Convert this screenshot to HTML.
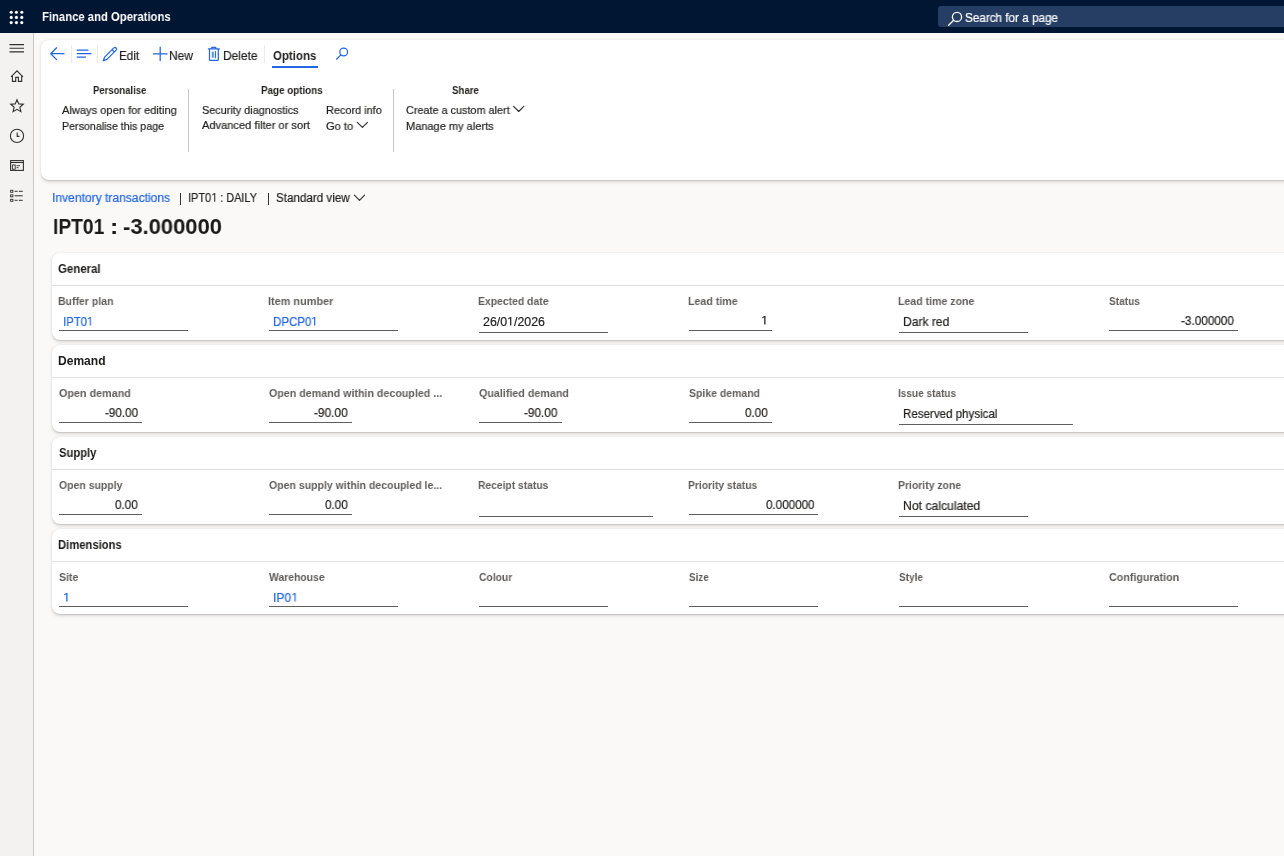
<!DOCTYPE html><html><head><meta charset="utf-8"><title>Finance and Operations</title><style>
*{margin:0;padding:0;box-sizing:border-box}
html,body{width:1284px;height:856px;overflow:hidden;background:#faf9f8;font-family:"Liberation Sans",sans-serif;position:relative}
.t{position:absolute;white-space:nowrap;line-height:1;transform-origin:0 0;will-change:transform}
.r{-webkit-text-stroke:0.2px currentColor}
.one{width:0.5562em;height:0.688em;vertical-align:0.04em;overflow:visible;fill:currentColor}
.abs{position:absolute}
#hdr{position:absolute;left:0;top:0;width:1284px;height:33px;background:#011632}
#search{position:absolute;left:938px;top:6px;width:360px;height:21px;background:#263e64;border-radius:3px}
#nav{position:absolute;left:0;top:33px;width:33px;height:823px;background:#f3f2f1}
#navb{position:absolute;left:33px;top:33px;width:1px;height:823px;background:#c8c6c4}
.card{position:absolute;background:#fff;border-radius:8px;box-shadow:0 1.6px 3.6px rgba(0,0,0,.13),0 0.3px 0.9px rgba(0,0,0,.11)}
.sep{position:absolute;width:1px;background:#c8c6c4}
.ul{position:absolute;height:1px}
.hl{position:absolute;height:1px;background:#e1dfdd}
</style></head><body>
<div id="hdr"></div><div id="search"></div><div id="nav"></div><div id="navb"></div>
<div class="card" style="left:41px;top:40px;width:1300px;height:140px"></div>
<div class="card" style="left:52px;top:253px;width:1300px;height:87px"></div>
<div class="hl" style="left:52px;top:285px;width:1240px"></div>
<div class="card" style="left:52px;top:345px;width:1300px;height:87px"></div>
<div class="hl" style="left:52px;top:377px;width:1240px"></div>
<div class="card" style="left:52px;top:437px;width:1300px;height:87px"></div>
<div class="hl" style="left:52px;top:469px;width:1240px"></div>
<div class="card" style="left:52px;top:529px;width:1300px;height:85px"></div>
<div class="hl" style="left:52px;top:561px;width:1240px"></div>
<div class="sep" style="left:71px;top:45px;height:18px;background:#ebeae9"></div>
<div class="sep" style="left:97px;top:45px;height:18px;background:#ebeae9"></div>
<div class="sep" style="left:264px;top:45px;height:18px;background:#ebeae9"></div>
<div class="abs" style="left:272px;top:66px;width:46px;height:2px;background:#2266e3"></div>
<div class="sep" style="left:188px;top:89px;height:63px"></div>
<div class="sep" style="left:393px;top:89px;height:63px"></div>
<div class="ul" style="left:59px;top:330px;width:129px;background:#605e5c"></div>
<div class="ul" style="left:269px;top:330px;width:129px;background:#605e5c"></div>
<div class="ul" style="left:479px;top:332px;width:129px;background:#605e5c"></div>
<div class="ul" style="left:689px;top:330px;width:83px;background:#605e5c"></div>
<div class="ul" style="left:899px;top:332px;width:129px;background:#605e5c"></div>
<div class="ul" style="left:1109px;top:330px;width:129px;background:#605e5c"></div>
<div class="ul" style="left:59px;top:422px;width:83px;background:#605e5c"></div>
<div class="ul" style="left:269px;top:422px;width:83px;background:#605e5c"></div>
<div class="ul" style="left:479px;top:422px;width:83px;background:#605e5c"></div>
<div class="ul" style="left:689px;top:422px;width:83px;background:#605e5c"></div>
<div class="ul" style="left:899px;top:424px;width:174px;background:#605e5c"></div>
<div class="ul" style="left:59px;top:514px;width:83px;background:#605e5c"></div>
<div class="ul" style="left:269px;top:514px;width:83px;background:#605e5c"></div>
<div class="ul" style="left:479px;top:516px;width:174px;background:#605e5c"></div>
<div class="ul" style="left:689px;top:514px;width:129px;background:#605e5c"></div>
<div class="ul" style="left:899px;top:516px;width:129px;background:#605e5c"></div>
<div class="ul" style="left:59px;top:606px;width:129px;background:#605e5c"></div>
<div class="ul" style="left:269px;top:606px;width:129px;background:#605e5c"></div>
<div class="ul" style="left:479px;top:606px;width:129px;background:#605e5c"></div>
<div class="ul" style="left:689px;top:606px;width:129px;background:#605e5c"></div>
<div class="ul" style="left:899px;top:606px;width:129px;background:#605e5c"></div>
<div class="ul" style="left:1109px;top:606px;width:129px;background:#605e5c"></div>
<div class="abs" style="left:180px;top:193px;width:1px;height:12px;background:#323130"></div>
<div class="abs" style="left:268px;top:193px;width:1px;height:12px;background:#323130"></div>
<svg class="abs" style="left:0;top:0" width="1284" height="220" viewBox="0 0 1284 220">
<g fill="#ffffff">
<circle cx="11.2" cy="12.3" r="1.55"/><circle cx="16.4" cy="12.3" r="1.55"/><circle cx="21.8" cy="12.3" r="1.55"/>
<circle cx="11.2" cy="17.4" r="1.55"/><circle cx="16.4" cy="17.4" r="1.55"/><circle cx="21.8" cy="17.4" r="1.55"/>
<circle cx="11.2" cy="22.6" r="1.55"/><circle cx="16.4" cy="22.6" r="1.55"/><circle cx="21.8" cy="22.6" r="1.55"/>
</g>
<g fill="none" stroke="#ffffff" stroke-width="1.3" stroke-linecap="round">
<circle cx="957" cy="16.9" r="4.6"/><path d="M953.7 20.3L948.6 25.3"/>
</g>
<g fill="none" stroke="#323130" stroke-width="1.1">
<path d="M9.5 44.6H24M9.5 48.2H24M9.5 51.9H24"/>
<path d="M11 76.8L17 70.8L23 76.8M12.4 75.6V81.4H15.7V77.4H18.4V81.4H21.7V75.6" stroke-linejoin="miter"/>
<path d="M17.00 99.70L18.76 103.87L23.28 104.26L19.85 107.23L20.88 111.64L17.00 109.30L13.12 111.64L14.15 107.23L10.72 104.26L15.24 103.87Z" stroke-linejoin="miter"/>
<circle cx="17" cy="135.9" r="6.6"/><path d="M17.2 132.6V136.4H19.5"/>
<rect x="10.6" y="160.6" width="12.8" height="9.8"/><path d="M10.6 162.5H23.4"/>
<rect x="12.4" y="165" width="2.8" height="4.2" stroke-width="0.9"/><path d="M16.5 165.7H20M16.5 167.7H18.6" stroke-width="0.9"/>
<rect x="10.6" y="190.3" width="2.3" height="2" stroke-width="0.9"/><rect x="10.6" y="194.8" width="2.3" height="2" stroke-width="0.9"/><rect x="10.6" y="199.3" width="2.3" height="2" stroke-width="0.9"/>
<path d="M14.6 191.3H17.6M18.8 191.3H22.8M14.6 195.8H22.8M14.6 200.3H17.6M18.8 200.3H22.8" stroke-width="1"/>
</g>
<g fill="none" stroke="#2266e3" stroke-width="1.25" stroke-linecap="round" stroke-linejoin="round">
<path d="M56.6 47.8L50.7 53.7L56.6 59.6M51 53.7H64"/>
<path d="M77.2 50H88M77.2 53.5H91M77.2 57H85.5"/>
<path d="M103.3 60.7L104.62 57.08L113.82 47.88A1.63 1.63 0 0 1 116.12 50.18L106.92 59.38Z M112.05 49.65L114.35 51.95"/>
<path d="M153.4 53.9H167M160.2 47.2V60.6"/>
<path d="M208.4 48.9H219.3M211.8 48.9V47.4H215.7V48.9M209.5 48.9V59.5Q209.5 60.4 210.4 60.4H217.4Q218.3 60.4 218.3 59.5V48.9"/>
<path d="M212.8 51.6V57.8" stroke-width="1.9" stroke-opacity="0.75" stroke-linecap="butt"/><path d="M215.4 51.6V57.8" stroke-width="1.1"/>
<circle cx="343.7" cy="52" r="3.9"/><path d="M340.9 54.9L336.6 59.2"/>
</g>
<g fill="none" stroke="#323130" stroke-width="1.15" stroke-linecap="round" stroke-linejoin="round">
<path d="M357.3 122.4L362.4 127.4L367.5 122.4"/>
<path d="M513.6 106.4L518.7 111.5L523.8 106.4"/>
<path d="M354.4 195.2L359.5 200.3L364.6 195.2"/>
</g>
</svg>

<div class="t" style="left:42.04px;top:10px;font-size:13.23px;font-weight:700;color:#ffffff;transform:scaleX(0.8543)">Finance and Operations</div>
<div class="t r" style="left:965.47px;top:13px;font-size:11.92px;color:#ffffff;transform:scaleX(0.9821)">Search for a page</div>
<div class="t r" style="left:118.74px;top:50px;font-size:12.50px;color:#201f1e;transform:scaleX(0.9352)">Edit</div>
<div class="t r" style="left:168.62px;top:50px;font-size:12.50px;color:#201f1e;transform:scaleX(0.9579)">New</div>
<div class="t r" style="left:222.72px;top:50px;font-size:12.50px;color:#201f1e;transform:scaleX(0.9551)">Delete</div>
<div class="t" style="left:273.03px;top:50px;font-size:12.50px;font-weight:700;color:#201f1e;transform:scaleX(0.9179)">Options</div>
<div class="t" style="left:92.87px;top:86px;font-size:10.47px;font-weight:700;color:#201f1e;transform:scaleX(0.9065)">Personalise</div>
<div class="t" style="left:260.94px;top:86px;font-size:10.47px;font-weight:700;color:#201f1e;transform:scaleX(0.9384)">Page options</div>
<div class="t" style="left:452.02px;top:86px;font-size:10.47px;font-weight:700;color:#201f1e;transform:scaleX(0.9217)">Share</div>
<div class="t r" style="left:62.18px;top:105px;font-size:11.34px;color:#201f1e;transform:scaleX(0.9805)">Always open for editing</div>
<div class="t r" style="left:62.12px;top:121px;font-size:11.34px;color:#201f1e;transform:scaleX(0.9423)">Personalise this page</div>
<div class="t r" style="left:201.81px;top:105px;font-size:11.34px;color:#201f1e;transform:scaleX(0.9580)">Security diagnostics</div>
<div class="t r" style="left:202.28px;top:120px;font-size:11.34px;color:#201f1e;transform:scaleX(0.9794)">Advanced filter or sort</div>
<div class="t r" style="left:325.71px;top:105px;font-size:11.34px;color:#201f1e;transform:scaleX(0.9616)">Record info</div>
<div class="t r" style="left:326.04px;top:121px;font-size:11.34px;color:#201f1e;transform:scaleX(0.9782)">Go to</div>
<div class="t r" style="left:406.25px;top:105px;font-size:11.34px;color:#201f1e;transform:scaleX(0.9571)">Create a custom alert</div>
<div class="t r" style="left:405.89px;top:121px;font-size:11.34px;color:#201f1e;transform:scaleX(0.9733)">Manage my alerts</div>
<div class="t r" style="left:51.89px;top:192px;font-size:12.65px;color:#2266e3;transform:scaleX(0.9551)">Inventory transactions</div>
<div class="t r" style="left:187.79px;top:192px;font-size:12.65px;color:#201f1e;transform:scaleX(0.8629)">IPT0<svg class="one" viewBox="0 -1409 1139 1409"><path transform="scale(1,-1)" d="M505 0L505 1222L192 1000L192 1186L527 1409L706 1409L706 0Z"/></svg> : DAILY</div>
<div class="t r" style="left:276.47px;top:192px;font-size:12.65px;color:#201f1e;transform:scaleX(0.9197)">Standard view</div>
<div class="t" style="left:52.61px;top:216px;font-size:22.24px;font-weight:700;color:#1b1a19;transform:scaleX(0.8650)">IPT01</div>
<div class="t" style="left:109.61px;top:216px;font-size:22.24px;font-weight:700;color:#1b1a19;transform:scaleX(1.1192)">:</div>
<div class="t" style="left:123.04px;top:216px;font-size:22.24px;font-weight:700;color:#1b1a19;transform:scaleX(0.9880)">-3.000000</div>
<div class="t" style="left:58.43px;top:264px;font-size:11.92px;font-weight:700;color:#1b1a19;transform:scaleX(0.9593)">General</div>
<div class="t" style="left:58.40px;top:296px;font-size:11.19px;font-weight:700;color:#605e5c;transform:scaleX(0.9388)">Buffer plan</div>
<div class="t" style="left:268.37px;top:296px;font-size:11.19px;font-weight:700;color:#605e5c;transform:scaleX(0.9737)">Item number</div>
<div class="t" style="left:478.40px;top:296px;font-size:11.19px;font-weight:700;color:#605e5c;transform:scaleX(0.9284)">Expected date</div>
<div class="t" style="left:688.39px;top:296px;font-size:11.19px;font-weight:700;color:#605e5c;transform:scaleX(0.9508)">Lead time</div>
<div class="t" style="left:898.39px;top:296px;font-size:11.19px;font-weight:700;color:#605e5c;transform:scaleX(0.9446)">Lead time zone</div>
<div class="t" style="left:1108.81px;top:296px;font-size:11.19px;font-weight:700;color:#605e5c;transform:scaleX(0.9006)">Status</div>
<div class="t r" style="left:63.15px;top:316px;font-size:12.35px;color:#2266e3;transform:scaleX(0.9194)">IPT0<svg class="one" viewBox="0 -1409 1139 1409"><path transform="scale(1,-1)" d="M505 0L505 1222L192 1000L192 1186L527 1409L706 1409L706 0Z"/></svg></div>
<div class="t r" style="left:273.05px;top:316px;font-size:12.35px;color:#2266e3;transform:scaleX(0.9328)">DPCP0<svg class="one" viewBox="0 -1409 1139 1409"><path transform="scale(1,-1)" d="M505 0L505 1222L192 1000L192 1186L527 1409L706 1409L706 0Z"/></svg></div>
<div class="t r" style="left:482.98px;top:316px;font-size:12.35px;color:#201f1e;transform:scaleX(1.0021)">26/0<svg class="one" viewBox="0 -1409 1139 1409"><path transform="scale(1,-1)" d="M505 0L505 1222L192 1000L192 1186L527 1409L706 1409L706 0Z"/></svg>/2026</div>
<div class="t r" style="left:760.94px;top:315px;font-size:12.35px;color:#201f1e;transform:scaleX(1.0630)"><svg class="one" viewBox="0 -1409 1139 1409"><path transform="scale(1,-1)" d="M505 0L505 1222L192 1000L192 1186L527 1409L706 1409L706 0Z"/></svg></div>
<div class="t r" style="left:902.81px;top:316px;font-size:12.35px;color:#201f1e;transform:scaleX(0.9788)">Dark red</div>
<div class="t r" style="left:1180.88px;top:315px;font-size:12.35px;color:#201f1e;transform:scaleX(0.9521)">-3.000000</div>
<div class="t" style="left:58.09px;top:356px;font-size:11.92px;font-weight:700;color:#1b1a19;transform:scaleX(1.0123)">Demand</div>
<div class="t" style="left:58.66px;top:388px;font-size:11.19px;font-weight:700;color:#605e5c;transform:scaleX(0.9629)">Open demand</div>
<div class="t" style="left:268.66px;top:388px;font-size:11.19px;font-weight:700;color:#605e5c;transform:scaleX(0.9538)">Open demand within decoupled ...</div>
<div class="t" style="left:478.66px;top:388px;font-size:11.19px;font-weight:700;color:#605e5c;transform:scaleX(0.9579)">Qualified demand</div>
<div class="t" style="left:688.80px;top:388px;font-size:11.19px;font-weight:700;color:#605e5c;transform:scaleX(0.9356)">Spike demand</div>
<div class="t" style="left:898.43px;top:388px;font-size:11.19px;font-weight:700;color:#605e5c;transform:scaleX(0.8978)">Issue status</div>
<div class="t r" style="left:104.58px;top:407px;font-size:12.35px;color:#201f1e;transform:scaleX(0.9441)">-90.00</div>
<div class="t r" style="left:314.27px;top:407px;font-size:12.35px;color:#201f1e;transform:scaleX(0.9618)">-90.00</div>
<div class="t r" style="left:524.28px;top:407px;font-size:12.35px;color:#201f1e;transform:scaleX(0.9529)">-90.00</div>
<div class="t r" style="left:745.24px;top:407px;font-size:12.35px;color:#201f1e;transform:scaleX(0.9445)">0.00</div>
<div class="t r" style="left:903.05px;top:408px;font-size:12.35px;color:#201f1e;transform:scaleX(0.9364)">Reserved physical</div>
<div class="t" style="left:58.58px;top:448px;font-size:11.92px;font-weight:700;color:#1b1a19;transform:scaleX(0.9434)">Supply</div>
<div class="t" style="left:58.67px;top:480px;font-size:11.19px;font-weight:700;color:#605e5c;transform:scaleX(0.9366)">Open supply</div>
<div class="t" style="left:268.67px;top:480px;font-size:11.19px;font-weight:700;color:#605e5c;transform:scaleX(0.9408)">Open supply within decoupled le...</div>
<div class="t" style="left:478.41px;top:480px;font-size:11.19px;font-weight:700;color:#605e5c;transform:scaleX(0.9191)">Receipt status</div>
<div class="t" style="left:688.41px;top:480px;font-size:11.19px;font-weight:700;color:#605e5c;transform:scaleX(0.9210)">Priority status</div>
<div class="t" style="left:898.40px;top:480px;font-size:11.19px;font-weight:700;color:#605e5c;transform:scaleX(0.9317)">Priority zone</div>
<div class="t r" style="left:114.94px;top:499px;font-size:12.35px;color:#201f1e;transform:scaleX(0.9445)">0.00</div>
<div class="t r" style="left:325.24px;top:499px;font-size:12.35px;color:#201f1e;transform:scaleX(0.9445)">0.00</div>
<div class="t r" style="left:765.54px;top:499px;font-size:12.35px;color:#201f1e;transform:scaleX(0.9433)">0.000000</div>
<div class="t r" style="left:903.00px;top:500px;font-size:12.35px;color:#201f1e;transform:scaleX(0.9885)">Not calculated</div>
<div class="t" style="left:58.15px;top:540px;font-size:11.92px;font-weight:700;color:#1b1a19;transform:scaleX(0.9446)">Dimensions</div>
<div class="t" style="left:58.80px;top:572px;font-size:11.19px;font-weight:700;color:#605e5c;transform:scaleX(0.9434)">Site</div>
<div class="t" style="left:269.09px;top:572px;font-size:11.19px;font-weight:700;color:#605e5c;transform:scaleX(0.9277)">Warehouse</div>
<div class="t" style="left:478.68px;top:572px;font-size:11.19px;font-weight:700;color:#605e5c;transform:scaleX(0.9230)">Colour</div>
<div class="t" style="left:688.82px;top:572px;font-size:11.19px;font-weight:700;color:#605e5c;transform:scaleX(0.8806)">Size</div>
<div class="t" style="left:898.81px;top:572px;font-size:11.19px;font-weight:700;color:#605e5c;transform:scaleX(0.8946)">Style</div>
<div class="t" style="left:1108.66px;top:572px;font-size:11.19px;font-weight:700;color:#605e5c;transform:scaleX(0.9570)">Configuration</div>
<div class="t r" style="left:63.24px;top:592px;font-size:12.35px;color:#2266e3;transform:scaleX(1.0630)"><svg class="one" viewBox="0 -1409 1139 1409"><path transform="scale(1,-1)" d="M505 0L505 1222L192 1000L192 1186L527 1409L706 1409L706 0Z"/></svg></div>
<div class="t r" style="left:272.89px;top:592px;font-size:12.35px;color:#2266e3;transform:scaleX(0.9721)">IP0<svg class="one" viewBox="0 -1409 1139 1409"><path transform="scale(1,-1)" d="M505 0L505 1222L192 1000L192 1186L527 1409L706 1409L706 0Z"/></svg></div>
</body></html>
